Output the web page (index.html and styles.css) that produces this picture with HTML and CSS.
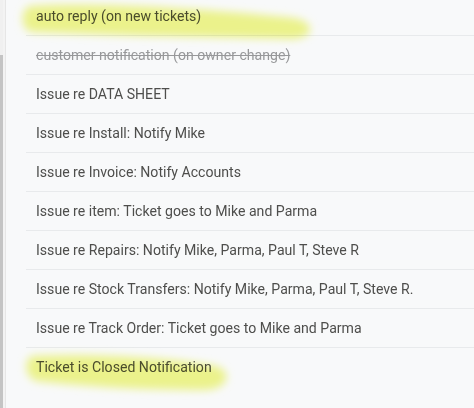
FILE: index.html
```html
<!DOCTYPE html>
<html>
<head>
<meta charset="utf-8">
<link rel="stylesheet" href="styles.css">
</head>
<body>
<div class="page">
  <div class="rail">
    <div class="track"><div class="thumb"></div></div>
    <div class="gutter"></div>
  </div>
  <ul class="list">
    <li class="row">auto reply (on new tickets)</li>
    <li class="row inactive">customer notification (on owner change)</li>
    <li class="row">Issue re DATA SHEET</li>
    <li class="row">Issue re Install: Notify Mike</li>
    <li class="row">Issue re Invoice: Notify Accounts</li>
    <li class="row">Issue re item: Ticket goes to Mike and Parma</li>
    <li class="row">Issue re Repairs: Notify Mike, Parma, Paul T, Steve R</li>
    <li class="row">Issue re Stock Transfers: Notify Mike, Parma, Paul T, Steve R.</li>
    <li class="row">Issue re Track Order: Ticket goes to Mike and Parma</li>
    <li class="row last">Ticket is Closed Notification</li>
  </ul>
  <svg class="marker" width="474" height="408" viewBox="0 0 474 408">
    <defs>
      <filter id="soft" x="-10%" y="-60%" width="120%" height="220%">
        <feGaussianBlur stdDeviation="4.5"/>
      </filter>
    </defs>
    <path filter="url(#soft)" d="M30,6 C90,2 200,8 294,18 C316,22 316,38 292,39 C200,37 90,35 32,32 C20,30 20,9 30,6 Z"/>
    <path filter="url(#soft)" d="M32,356 C100,353 180,359 216,366 C234,372 228,390 204,390 C140,390 80,386 36,381 C24,377 24,359 32,356 Z"/>
  </svg>
</div>
</body>
</html>
```
FILE: styles.css
```css
html, body {
  margin: 0;
  padding: 0;
  background: #f8f9fa;
}
.page {
  position: relative;
  display: flex;
  width: 474px;
  height: 408px;
  overflow: hidden;
  font-family: Roboto, "Noto Sans", sans-serif;
  font-size: 14.1px;
  color: #4e4e4c;
}
.rail {
  display: flex;
  flex: none;
}
.track {
  width: 3px;
  background: #f0f0f0;
  display: flex;
  flex-direction: column;
}
.thumb {
  margin-top: 55px;
  flex: 1;
  background: #c4c4c4;
}
.gutter {
  width: 2px;
  background: #f3f3f3;
  border-right: 1px solid #e6e6e6;
}
.list {
  list-style: none;
  margin: -3px 0 0 20px;
  padding: 0;
  flex: 1;
}
.row {
  height: 38px;
  line-height: 39px;
  padding-left: 10px;
  border-bottom: 1px solid #e8eaec;
  white-space: nowrap;
}
.row.last {
  border-bottom: none;
}
.inactive {
  color: #97989a;
  text-decoration: line-through;
}
.marker {
  position: absolute;
  left: 0;
  top: 0;
  pointer-events: none;
  mix-blend-mode: multiply;
  fill: #f2f88e;
}
```
